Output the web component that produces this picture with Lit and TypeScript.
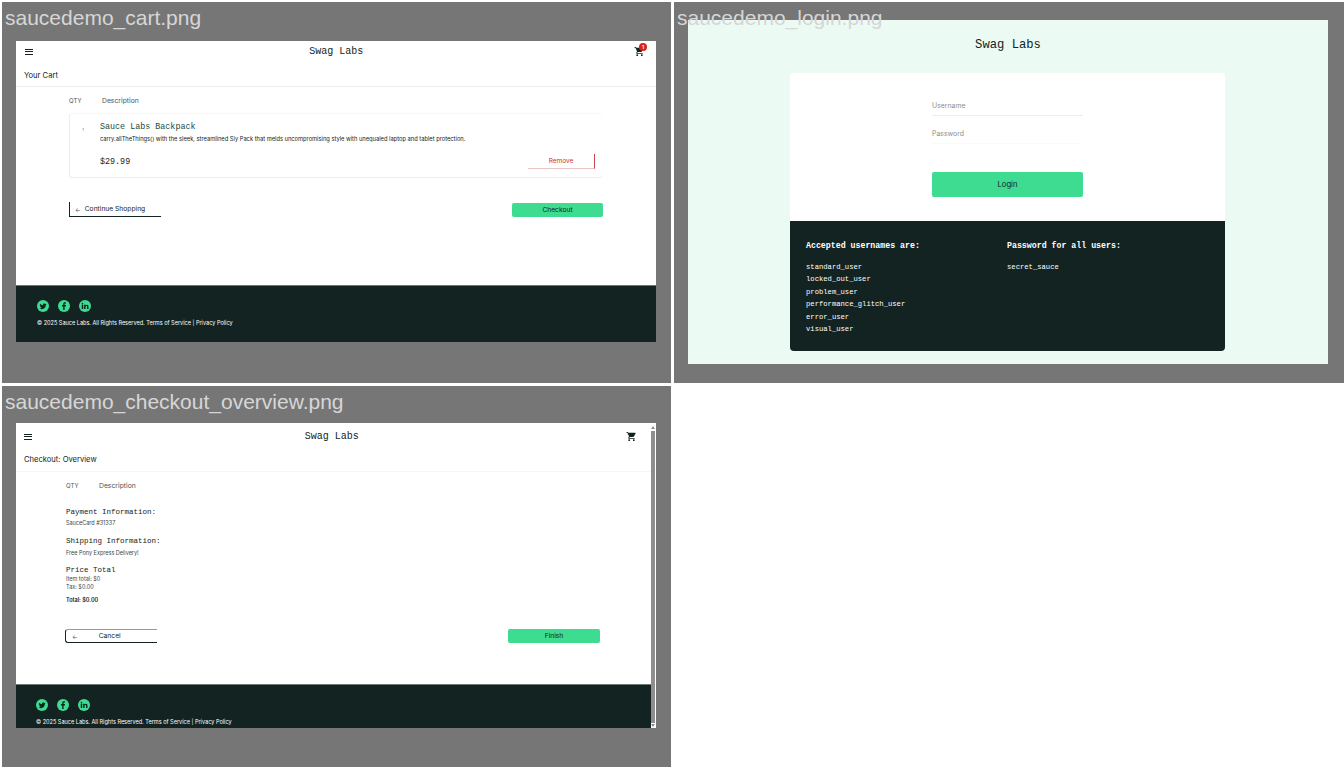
import { LitElement, html, css, svg } from "lit";
import { customElement } from "lit/decorators.js";

const cartPath = "M7 18c-1.1 0-1.99.9-1.99 2S5.9 22 7 22s2-.9 2-2-.9-2-2-2zM1 2v2h2l3.6 7.59-1.35 2.45c-.16.29-.25.63-.25.96 0 1.1.9 2 2 2h12v-2H7.42c-.14 0-.25-.11-.25-.25l.03-.12.9-1.63h7.45c.75 0 1.41-.41 1.75-1.03l3.58-6.47c.08-.12.12-.27.12-.48 0-.55-.45-1-1-1H5.21l-.94-2H1zm16 16c-1.1 0-1.99.9-1.99 2s.89 2 1.99 2 2-.9 2-2-.9-2-2-2z";

const twitter = svg`<path fill="#132322" d="M19 8.200c-.5.2-1 .4-1.600.4.6-.3 1-.8 1.200-1.500-.5.3-1.100.6-1.800.7a2.800 2.800 0 0 0-4.800 2.600A8 8 0 0 1 6.200 7.500a2.800 2.800 0 0 0 .9 3.800c-.5 0-.9-.1-1.300-.4 0 1.400 1 2.500 2.300 2.800-.4.1-.8.1-1.300 0 .4 1.100 1.400 1.900 2.600 2a5.700 5.700 0 0 1-4.200 1.200A8 8 0 0 0 17.600 10.800v-.4c.5-.6 1-1.200 1.400-2.200z"/>`;
const facebook = svg`<path fill="#132322" d="M13.200 20v-7h2.400l.4-2.800h-2.800V8.500c0-.8.2-1.300 1.400-1.300H16V4.700c-.3 0-1.100-.1-2.100-.1-2.100 0-3.500 1.300-3.500 3.600v2H8V13h2.400v7z"/>`;
const linkedin = svg`<path fill="#132322" d="M5.500 9.500h2.900V18H5.500zM7 5.500a1.600 1.600 0 1 1 0 3.300 1.600 1.600 0 0 1 0-3.300zM10.200 9.500H13v1.200c.5-.8 1.400-1.400 2.700-1.400 2.500 0 3.300 1.600 3.300 4V18h-2.900v-4.100c0-1.100-.3-2-1.400-2-1.200 0-1.600.9-1.600 2V18h-2.900z"/>`;

const users = ["standard_user", "locked_out_user", "problem_user", "performance_glitch_user", "error_user", "visual_user"];

@customElement("app-root")
export class AppRoot extends LitElement {
  static styles = css`
    :host { display: block; width: 1344px; height: 768px; background: #fff; overflow: hidden; font-family: "Inter", "Liberation Sans", sans-serif; color: #132322; }
    .board { display: grid; grid-template-columns: 669px 670px; grid-template-rows: 381px 381px; column-gap: 3px; row-gap: 3px; padding: 2px 0 0 2px; }
    .panel { position: relative; background: #767676; overflow: hidden; display: flex; align-items: flex-start; }
    .label { position: absolute; left: 3px; top: 4px; font: 21px/24px "Liberation Sans", sans-serif; color: #d6d6d6; white-space: nowrap; z-index: 2; }
    .p-cart { padding: 39px 0 0 14px; }
    .p-login { padding: 18px 0 0 14px; }
    .p-over { padding: 37px 0 0 14px; }

    .screen { width: 640px; background: #fff; display: flex; flex-direction: column; overflow: hidden; }
    .cart-screen { height: 301px; }
    .over-screen { height: 305px; flex-direction: row; }
    .over-main { flex: 1; min-width: 0; display: flex; flex-direction: column; }

    .top { display: flex; align-items: center; justify-content: space-between; padding: 0 11px 0 9px; flex: none; }
    .cart-screen .top { height: 21px; }
    .over-main .top { height: 27px; padding: 0 14px 0 8px; }
    .menu { width: 7.500px; height: 6px; border-top: 1px solid #132322; border-bottom: 1px solid #132322; position: relative; box-sizing: border-box; }
    .menu::after { content: ""; position: absolute; left: 0; right: 0; top: 1.500px; height: 1px; background: #132322; }
    .brand { font: 10px/14px "Liberation Mono", monospace; color: #132322; margin-left: 6px; }
    .cart { position: relative; width: 11px; height: 11px; }
    .cart svg { display: block; width: 11px; height: 11px; fill: #132322; }
    .badge { position: absolute; left: 5px; top: -3px; width: 8px; height: 8px; border-radius: 50%; background: #d6231c; color: #fff; font: 700 5px/8px "Inter", sans-serif; text-align: center; }

    .sub { display: flex; align-items: center; padding: 0 8px; font-size: 7.600px; font-weight: 400; flex: none; }
    .cart-screen .sub { padding-top: 2px; box-sizing: border-box; border-bottom: 1px solid #ededed; height: 25px; }
    .over-main .sub { padding-bottom: 3px; height: 18px; border-bottom: 1px solid #f5f5f5; }

    .content { display: flex; flex-direction: column; flex: none; }
    .cart-screen .content { padding: 0 53px; }
    .over-main .content { padding: 0 51px 0 50px; }
    .cols { display: flex; align-items: center; height: 26px; font-size: 6.800px; color: #4a5655; }
    .cols .qty { font-size: 6px; }
    .qty { width: 33px; }

    .item { height: 65px; box-sizing: border-box; border: 1px solid #ededed; border-top-color: #f7f7f7; border-right-color: #fff; border-radius: 3px; padding: 7px 7px 0 0; display: flex; }
    .count { width: 30px; flex: none; text-align: center; font-size: 4px; line-height: 5px; padding-top: 6px; padding-right: 4px; box-sizing: border-box; color: #667; }
    .item-main { flex: 1; min-width: 0; display: flex; flex-direction: column; }
    .name { font: 8.400px/12px "Liberation Mono", monospace; color: #1a4a3a; }
    .desc { font-size: 5.740px; line-height: 8px; margin-top: 2px; white-space: nowrap; color: #132322; }
    .buy { display: flex; align-items: flex-start; justify-content: space-between; margin-top: 7px; }
    .price { font: 8.400px/15px "Liberation Mono", monospace; color: #132322; margin-top: 5px; }
    .remove { width: 67px; height: 15px; margin-top: 4px; box-sizing: border-box; border-right: 1px solid #c8444c; border-bottom: 1px solid #e8c6c8; font-size: 6.500px; line-height: 14px; color: #d0312d; text-align: center; }

    .actions { display: flex; justify-content: space-between; align-items: flex-start; }
    .cart-screen .actions { margin-top: 24px; }
    .btn-back { width: 92px; box-sizing: border-box; border-left: 1px solid #132322; border-bottom: 1px solid #132322; font-size: 6.700px; display: flex; align-items: center; }
    .cart-screen .btn-back { height: 15px; padding-left: 5px; gap: 4px; }
    .btn-go { background: #3ddc91; border-radius: 2px; text-align: center; font-size: 6.700px; color: #132322; width: 91px; }
    .cart-screen .btn-go { height: 14px; line-height: 14px; margin-top: 1px; }
    .arrow { color: #555; font-size: 6px; }

    .footer { margin-top: auto; background: #132322; border-top: 1px solid #6c7675; padding: 14px 0 0 21px; flex: none; overflow: hidden; box-sizing: border-box; }
    .cart-screen .footer { height: 57px; }
    .over-main .footer { height: 44px; padding-left: 20px; }
    .social { display: flex; gap: 9px; }
    .social span { width: 12px; height: 12px; border-radius: 50%; background: #3ddc91; display: block; }
    .social svg { display: block; width: 12px; height: 12px; }
    .legal { font-size: 5.550px; line-height: 8px; color: #fff; margin-top: 7px; white-space: nowrap; }

    .info { font: 7.500px/10px "Liberation Mono", monospace; color: #132322; }
    .small { font-size: 5.500px; line-height: 8px; color: #3a4746; white-space: nowrap; }
    .summary { display: flex; flex-direction: column; padding-top: 9px; }
    .gap-s { margin-top: 2px; }
    .gap-s2 { margin-top: 3px; }
    .gap-m { margin-top: 9px; }
    .gap-l { margin-top: 8px; }
    .total { margin-top: 5px; font-weight: 600; color: #132322; }
    .over-main .actions { margin-top: 25px; margin-left: -1px; }
    .over-main .btn-back { width: 92px; height: 14px; border-top: 1px solid #9a9a9a; border-radius: 3px 0 0 3px; padding-left: 6px; }
    .over-main .btn-go { height: 14px; line-height: 14px; width: 92px; }
    .cancel { margin-left: 21px; }

    .scroll { width: 5px; background: #fff; flex: none; display: flex; flex-direction: column; align-items: flex-start; padding: 3px 0 0; box-sizing: border-box; }
    .scroll i { display: block; width: 0; height: 0; border-left: 2px solid transparent; border-right: 2px solid transparent; flex: none; margin-bottom: 2px; }
    .scroll .up { border-bottom: 3px solid #8e8e8e; }
    .scroll .down { border-top: 3px solid #8e8e8e; margin: 1px 0 1px; }
    .thumb { width: 4px; flex: 1; background: #8e8e8e; }

    .login { height: 344px; width: 640px; background: #ebfbf4; display: flex; flex-direction: column; align-items: center; }
    .login-brand { font: 12.200px/50px "Liberation Mono", monospace; height: 53px; flex: none; color: #132322; }
    .login-card { width: 435px; height: 148px; margin-right: 1px; background: #fff; display: flex; flex-direction: column; align-items: center; flex: none; border-radius: 3px 3px 0 0; }
    .form { width: 151px; display: flex; flex-direction: column; padding-top: 20px; }
    .field { height: 23px; box-sizing: border-box; font-size: 6.900px; line-height: 26px; color: #8a8f8e; border-bottom: 1px solid #ededed; margin-bottom: 5px; }
    .field.last { border-bottom-color: #fafafa; }
    .login-btn { height: 25px; background: #3ddc91; border-radius: 2px; text-align: center; font-size: 7.700px; line-height: 25px; margin-top: 23px; color: #132322; }
    .creds { width: 435px; height: 130px; margin-right: 1px; box-sizing: border-box; background: #132322; border-radius: 0 0 4px 4px; display: grid; grid-template-columns: 201px 1fr; padding: 19px 16px 0; color: #fff; flex: none; }
    .creds h4 { margin: 0; font: 700 8.250px/12px "Liberation Mono", monospace; white-space: nowrap; }
    .creds ul { list-style: none; margin: 9px 0 0; padding: 0; font: 7.200px/12.400px "Liberation Mono", monospace; }
  `;

  private footer() {
    return html`<div class="footer">
      <div class="social">
        <span><svg viewBox="0 0 24 24">${twitter}</svg></span>
        <span><svg viewBox="0 0 24 24">${facebook}</svg></span>
        <span><svg viewBox="0 0 24 24">${linkedin}</svg></span>
      </div>
      <div class="legal">© 2025 Sauce Labs. All Rights Reserved. Terms of Service | Privacy Policy</div>
    </div>`;
  }

  private cartIcon(count?: number) {
    return html`<div class="cart"><svg viewBox="0 0 24 24"><path d=${cartPath}></path></svg>${count ? html`<div class="badge">${count}</div>` : ""}</div>`;
  }

  render() {
    return html`<div class="board">
      <section class="panel p-cart">
        <div class="label">saucedemo_cart.png</div>
        <div class="screen cart-screen">
          <div class="top"><div class="menu"></div><div class="brand">Swag Labs</div>${this.cartIcon(1)}</div>
          <div class="sub">Your Cart</div>
          <div class="content">
            <div class="cols"><span class="qty">QTY</span><span>Description</span></div>
            <div class="item">
              <div class="count">1</div>
              <div class="item-main">
                <div class="name">Sauce Labs Backpack</div>
                <div class="desc">carry.allTheThings() with the sleek, streamlined Sly Pack that melds uncompromising style with unequaled laptop and tablet protection.</div>
                <div class="buy"><span class="price">$29.99</span><div class="remove">Remove</div></div>
              </div>
            </div>
            <div class="actions">
              <div class="btn-back"><span class="arrow">←</span><span>Continue Shopping</span></div>
              <div class="btn-go">Checkout</div>
            </div>
          </div>
          ${this.footer()}
        </div>
      </section>

      <section class="panel p-login">
        <div class="label">saucedemo_login.png</div>
        <div class="login">
          <div class="login-brand">Swag Labs</div>
          <div class="login-card">
            <div class="form">
              <div class="field">Username</div>
              <div class="field last">Password</div>
              <div class="login-btn">Login</div>
            </div>
          </div>
          <div class="creds">
            <div><h4>Accepted usernames are:</h4><ul>${users.map((u) => html`<li>${u}</li>`)}</ul></div>
            <div><h4>Password for all users:</h4><ul><li>secret_sauce</li></ul></div>
          </div>
        </div>
      </section>

      <section class="panel p-over">
        <div class="label">saucedemo_checkout_overview.png</div>
        <div class="screen over-screen">
          <div class="over-main">
            <div class="top"><div class="menu"></div><div class="brand">Swag Labs</div>${this.cartIcon()}</div>
            <div class="sub">Checkout: Overview</div>
            <div class="content">
              <div class="cols"><span class="qty">QTY</span><span>Description</span></div>
              <div class="summary">
                <div class="info">Payment Information:</div>
                <div class="small gap-s">SauceCard #31337</div>
                <div class="info gap-m">Shipping Information:</div>
                <div class="small gap-s2">Free Pony Express Delivery!</div>
                <div class="info gap-l">Price Total</div>
                <div class="small">Item total: $0</div>
                <div class="small">Tax: $0.00</div>
                <div class="small total">Total: $0.00</div>
              </div>
              <div class="actions">
                <div class="btn-back"><span class="arrow">←</span><span class="cancel">Cancel</span></div>
                <div class="btn-go">Finish</div>
              </div>
            </div>
            ${this.footer()}
          </div>
          <div class="scroll"><i class="up"></i><div class="thumb"></div><i class="down"></i></div>
        </div>
      </section>
    </div>`;
  }
}
